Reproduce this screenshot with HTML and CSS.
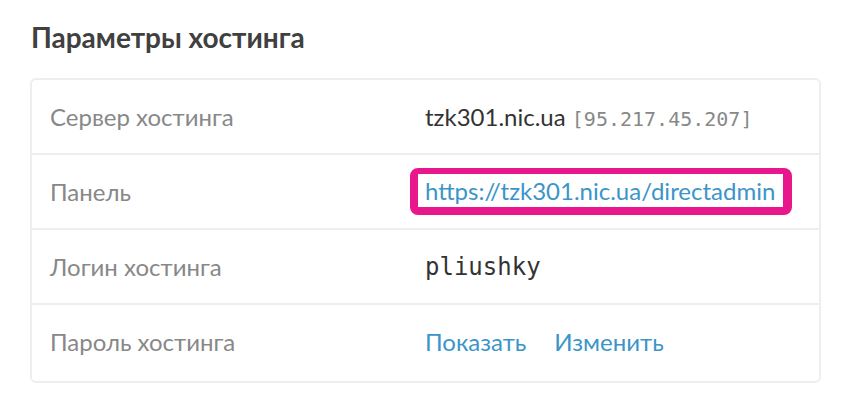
FILE: index.html
```html
<!DOCTYPE html>
<html lang="ru">
<head>
    <meta charset="UTF-8">
    <title>Параметры хостинга</title>
    <link rel="stylesheet" href="styles.css">
</head>
<body>
    <h2 class="section-title">Параметры хостинга</h2>
    <div class="params-card">
        <div class="param-row">
            <div class="param-label">Сервер хостинга</div>
            <div class="param-value">tzk301.nic.ua <span class="ip">[95.217.45.207]</span></div>
        </div>
        <div class="param-row">
            <div class="param-label">Панель</div>
            <div class="param-value">
                <span class="highlight"><a href="#" class="link">https://tzk301.nic.ua/directadmin</a></span>
            </div>
        </div>
        <div class="param-row">
            <div class="param-label">Логин хостинга</div>
            <div class="param-value login">pliushky</div>
        </div>
        <div class="param-row">
            <div class="param-label">Пароль хостинга</div>
            <div class="param-value actions">
                <a href="#" class="link">Показать</a>
                <a href="#" class="link">Изменить</a>
            </div>
        </div>
    </div>
</body>
</html>
```

FILE: styles.css
```css
body {
    margin: 0;
    padding: 19px 32px 26px 30px;
    background-color: #fff;
    font-family: Lato, "Noto Sans", sans-serif;
    color: #333;
}

.section-title {
    margin: 0 0 23px 1px;
    font-size: 28px;
    font-weight: 700;
    line-height: 36px;
    color: #404040;
}

.params-card {
    width: 787px;
    padding-bottom: 3px;
    border: 2px solid #eeeeee;
    border-radius: 6px;
}

.param-row {
    display: grid;
    grid-template-columns: 376px 1fr;
    align-items: center;
    height: 73px;
    padding: 0 18px 0 17px;
    font-size: 24px;
}

.param-row + .param-row {
    border-top: 2px solid #eeeeee;
}

.param-label {
    padding-left: 1px;
    color: #888;
}

.param-value {
    color: #333;
}

.ip {
    font-family: "DejaVu Sans Mono", monospace;
    font-size: 20px;
    color: #888;
}

.login {
    font-family: "DejaVu Sans Mono", monospace;
    font-size: 24px;
}

.actions {
    display: flex;
    gap: 28px;
}

.highlight {
    display: inline-block;
    margin-left: -15px;
    padding: 2px 8px 2px 7px;
    border-style: solid;
    border-color: #e8188c;
    border-width: 6px 9px 8px 8px;
    border-radius: 8px;
    background-color: #fff;
    line-height: 29px;
}

.link {
    color: #3b95c9;
    text-decoration: none;
}
```
